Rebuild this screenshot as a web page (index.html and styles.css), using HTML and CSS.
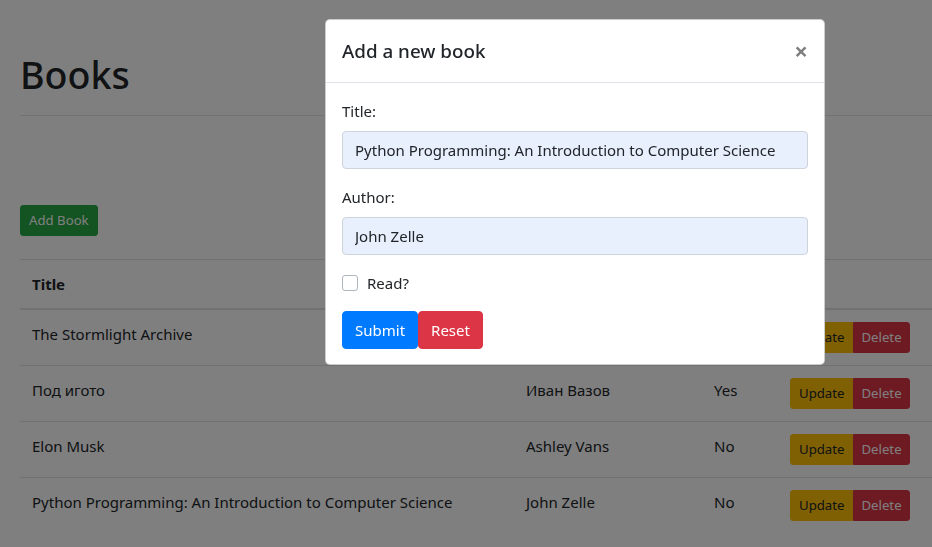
FILE: index.html
```html
<!DOCTYPE html>
<html>
<head>
<meta charset="utf-8">
<title>Books</title>
<link rel="stylesheet" href="styles.css">
</head>
<body>
<div class="page">
  <h1 class="page-title">Books</h1>
  <hr class="divider">
  <div class="toolbar">
    <button class="btn btn-sm btn-success">Add Book</button>
  </div>
  <table class="table">
    <colgroup>
      <col class="col-title">
      <col class="col-author">
      <col class="col-read">
      <col class="col-actions">
    </colgroup>
    <thead>
      <tr><th>Title</th><th>Author</th><th>Read?</th><th></th></tr>
    </thead>
    <tbody>
      <tr>
        <td>The Stormlight Archive</td><td>Brandon Sanderson</td><td>Yes</td>
        <td><div class="btn-group"><button class="btn btn-sm btn-warning">Update</button><button class="btn btn-sm btn-danger">Delete</button></div></td>
      </tr>
      <tr>
        <td>Под игото</td><td>Иван Вазов</td><td>Yes</td>
        <td><div class="btn-group"><button class="btn btn-sm btn-warning">Update</button><button class="btn btn-sm btn-danger">Delete</button></div></td>
      </tr>
      <tr>
        <td>Elon Musk</td><td>Ashley Vans</td><td>No</td>
        <td><div class="btn-group"><button class="btn btn-sm btn-warning">Update</button><button class="btn btn-sm btn-danger">Delete</button></div></td>
      </tr>
      <tr>
        <td>Python Programming: An Introduction to Computer Science</td><td>John Zelle</td><td>No</td>
        <td><div class="btn-group"><button class="btn btn-sm btn-warning">Update</button><button class="btn btn-sm btn-danger">Delete</button></div></td>
      </tr>
    </tbody>
  </table>
</div>
<div class="backdrop"></div>
<div class="modal">
  <div class="modal-header">
    <h5 class="modal-title">Add a new book</h5>
    <button class="close" type="button">&times;</button>
  </div>
  <div class="modal-body">
    <div class="form-group">
      <label class="form-label">Title:</label>
      <input class="form-control" type="text" value="Python Programming: An Introduction to Computer Science">
    </div>
    <div class="form-group">
      <label class="form-label">Author:</label>
      <input class="form-control" type="text" value="John Zelle">
    </div>
    <div class="form-check">
      <input class="check" type="checkbox">
      <label class="check-label">Read?</label>
    </div>
    <div class="actions"><button class="btn btn-primary">Submit</button><button class="btn btn-danger">Reset</button></div>
  </div>
</div>
</body>
</html>
```
FILE: styles.css
```css
* { box-sizing: border-box; }
html, body { margin: 0; padding: 0; }
body {
  font-family: "Noto Sans", "Open Sans", sans-serif;
  font-size: 15px;
  line-height: 24px;
  color: #212529;
  background: #fff;
  overflow: hidden;
}
.page {
  padding: 51px 0 0 20px;
}
.page-title {
  margin: 0 0 8px 0;
  font-size: 37.6px;
  font-weight: 500;
  line-height: 48px;
}
.divider {
  margin: 16px 0 0 0;
  border: 0;
  border-top: 1px solid rgba(0,0,0,.1);
  height: 0;
}
.toolbar {
  padding-top: 89px;
  padding-bottom: 23px;
}
.btn {
  display: inline-block;
  font-family: inherit;
  font-size: 15px;
  line-height: 24px;
  font-weight: 400;
  padding: 6px 12px;
  border: 1px solid transparent;
  border-radius: 4px;
  color: #fff;
  cursor: pointer;
  vertical-align: middle;
}
.btn-sm {
  font-size: 13.2px;
  line-height: 21px;
  padding: 4px 8px;
  border-radius: 3px;
}
.btn-success { background: #28a745; border-color: #28a745; }
.btn-warning { background: #ffc107; border-color: #ffc107; color: #212529; }
.btn-danger { background: #dc3545; border-color: #dc3545; }
.btn-primary { background: #007bff; border-color: #007bff; }
.btn-group { display: inline-flex; }
.btn-group .btn:first-child { border-top-right-radius: 0; border-bottom-right-radius: 0; }
.btn-group .btn:last-child { border-top-left-radius: 0; border-bottom-left-radius: 0; padding-right: 7px; padding-left: 7px; }
.table {
  width: 912px;
  border-collapse: collapse;
  table-layout: fixed;
}
.col-title { width: 494px; }
.col-author { width: 188px; }
.col-read { width: 76px; }
.col-actions { width: 154px; }
.table th, .table td {
  padding: 12px;
  text-align: left;
  vertical-align: top;
  border-top: 1px solid #dee2e6;
  white-space: nowrap;
}
.table th { font-weight: 700; border-bottom: 2px solid #dee2e6; }
.backdrop {
  position: fixed;
  inset: 0;
  background: rgba(0,0,0,.5);
}
.modal {
  position: absolute;
  left: 325px;
  top: 19px;
  width: 500px;
  background: #fff;
  border: 1px solid rgba(0,0,0,.2);
  border-radius: 5px;
}
.modal-header {
  display: flex;
  align-items: flex-start;
  justify-content: space-between;
  padding: 16px 16px;
  border-bottom: 1px solid #dee2e6;
}
.modal-title {
  margin: 0;
  font-size: 18.8px;
  font-weight: 500;
  line-height: 30px;
}
.close {
  background: none;
  border: 0;
  padding: 0;
  margin: 0;
  font-family: inherit;
  font-size: 24px;
  font-weight: 700;
  line-height: 30px;
  color: #000;
  opacity: .5;
}
.modal-body { padding: 16px 16px 15px; }
.form-group { margin-bottom: 16px; }
.form-label { display: block; margin-bottom: 8px; }
.form-control {
  display: block;
  width: 100%;
  height: 38px;
  padding: 6px 12px;
  font-family: inherit;
  font-size: 15px;
  line-height: 24px;
  color: #212529;
  background: #e8f0fe;
  border: 1px solid #ced4da;
  border-radius: 4px;
}
.form-check {
  display: flex;
  align-items: center;
  margin-bottom: 16px;
  height: 24px;
}
.check {
  appearance: none;
  -webkit-appearance: none;
  width: 16px;
  height: 16px;
  margin: 0 9px 0 0;
  border: 1px solid #adb5bd;
  border-radius: 3px;
  background: #fff;
}
.actions { display: flex; }
```
